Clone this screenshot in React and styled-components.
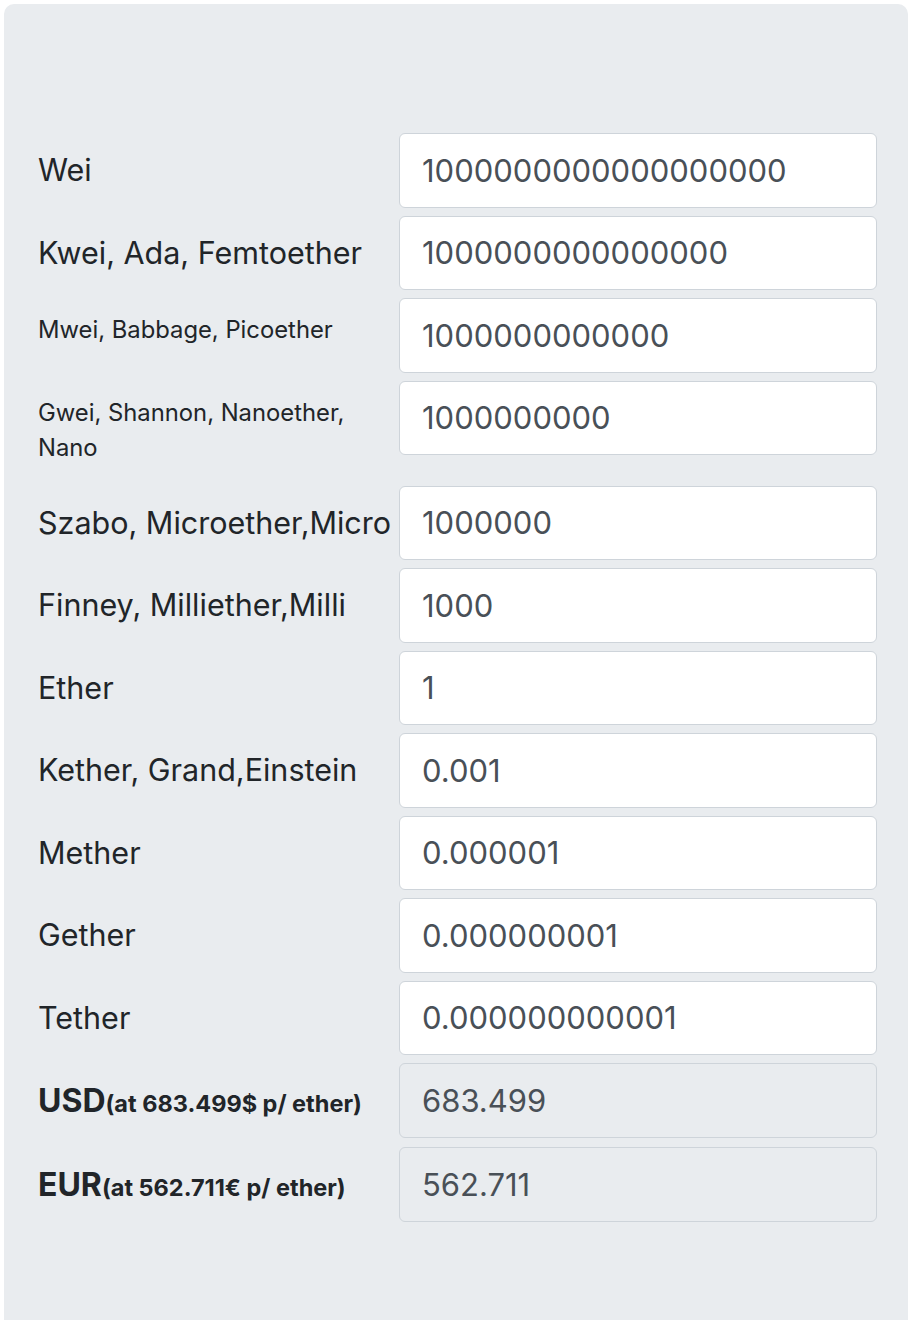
import React from 'react';
import styled, { createGlobalStyle } from 'styled-components';

const GlobalStyle = createGlobalStyle`
  body {
    margin: 0;
    background: #fff;
    font-family: 'Inter', 'Noto Sans', sans-serif;
  }
`;

const Panel = styled.div`
  margin: 4px;
  min-height: 1400px;
  background: #e9ecef;
  border-radius: 10px;
  padding: 129px 31px 120px 34px;
  box-sizing: border-box;
`;

const Row = styled.div`
  display: grid;
  grid-template-columns: 361px 1fr;
  margin-bottom: 8px;
`;

const Label = styled.label`
  font-size: ${p => (p.small ? '23.8px' : '30.5px')};
  line-height: ${p => (p.small ? '35px' : '1.5')};
  padding: ${p => (p.small ? '14px 0 13px' : '14px 0')};
  color: #212529;
  white-space: ${p => (p.small ? 'normal' : 'nowrap')};
`;

const Currency = styled.label`
  font-size: 32px;
  font-weight: 700;
  line-height: 1.5;
  padding: 14px 0;
  color: #212529;
  white-space: nowrap;

  small {
    font-size: 23.5px;
    font-weight: 700;
  }
`;

const Field = styled.input`
  height: 74.5px;
  box-sizing: border-box;
  width: 100%;
  border: 1.5px solid #ced4da;
  border-radius: 6px;
  padding: 0 22px;
  font-family: 'Inter', 'Noto Sans', sans-serif;
  font-size: 31px;
  color: #495057;
  background: ${p => (p.disabled ? '#e9ecef' : '#fff')};
  outline: none;
`;

const units = [
  { name: 'Wei', value: '1000000000000000000' },
  { name: 'Kwei, Ada, Femtoether', value: '1000000000000000' },
  { name: 'Mwei, Babbage, Picoether', value: '1000000000000', small: true },
  { name: 'Gwei, Shannon, Nanoether, Nano', value: '1000000000', small: true },
  { name: 'Szabo, Microether,Micro', value: '1000000' },
  { name: 'Finney, Milliether,Milli', value: '1000' },
  { name: 'Ether', value: '1' },
  { name: 'Kether, Grand,Einstein', value: '0.001' },
  { name: 'Mether', value: '0.000001' },
  { name: 'Gether', value: '0.000000001' },
  { name: 'Tether', value: '0.000000000001' },
];

const fiat = [
  { code: 'USD', note: '(at 683.499$ p/ ether)', value: '683.499' },
  { code: 'EUR', note: '(at 562.711€ p/ ether)', value: '562.711' },
];

export default function App() {
  return (
    <>
      <GlobalStyle />
      <Panel>
        {units.map(u => (
          <Row key={u.name}>
            <Label small={u.small}>{u.name}</Label>
            <Field type="text" value={u.value} readOnly />
          </Row>
        ))}
        {fiat.map(f => (
          <Row key={f.code}>
            <Currency>
              {f.code}
              <small>{f.note}</small>
            </Currency>
            <Field type="text" value={f.value} disabled readOnly />
          </Row>
        ))}
      </Panel>
    </>
  );
}
